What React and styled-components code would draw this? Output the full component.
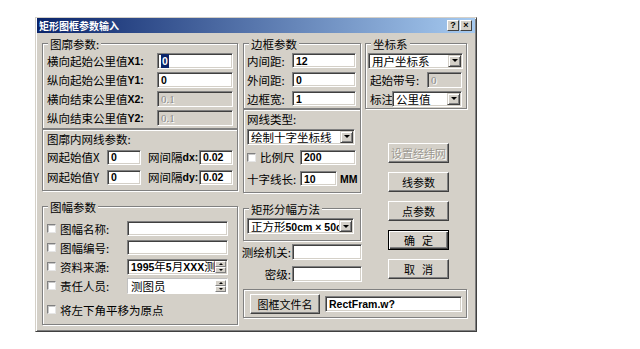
import React from 'react'
import styled, { createGlobalStyle, css } from 'styled-components'

const face = '#d4d0c8';

const GlobalStyle = createGlobalStyle`
  html, body { margin: 0; padding: 0; background: #fff; }
  body {
    font-family: "Noto Sans CJK SC", "Liberation Sans", sans-serif;
    font-size: 11.5px;
    color: #000;
  }
`;

const Dialog = styled.div`
  margin: 17px 0 0 35px;
  width: 442px;
  height: 315px;
  box-sizing: border-box;
  background: ${face};
  border: 1px solid;
  border-color: ${face} #404040 #404040 ${face};
  box-shadow: inset 1px 1px #fff, inset -1px -1px #808080;
  padding: 0 1px 1px 1px;
  display: flex;
  flex-direction: column;
`;

const TitleBar = styled.div`
  height: 15px;
  display: flex;
  align-items: center;
  justify-content: space-between;
  background: linear-gradient(90deg, #0a246a, #a6caf0);
  padding: 0 3px 0 2px;
`;

const Title = styled.span`
  color: #fff;
  font-weight: bold;
  font-size: 10px;
  line-height: 15px;
`;

const CapButtons = styled.div`
  display: flex;
  gap: 1px;
`;

const CapButton = styled.span`
  box-sizing: border-box;
  width: 12px;
  height: 11px;
  background: ${face};
  border: 1px solid;
  border-color: #fff #404040 #404040 #fff;
  display: flex;
  align-items: center;
  justify-content: center;
  font-family: "Liberation Sans", sans-serif;
  font-weight: bold;
  font-size: 9px;
  line-height: 9px;
`;

const Body = styled.div`
  display: flex;
  gap: 5px;
  padding: 10px 0 0 5px;
`;

const Column = styled.div`
  width: ${p => p.$w}px;
  flex: none;
  display: flex;
  flex-direction: column;
`;

const TopRow = styled.div`
  display: flex;
  gap: 4px;
`;

const Group = styled.div`
  box-sizing: border-box;
  height: ${p => p.$h}px;
  margin-top: ${p => p.$mt || 0}px;
  border: 1px solid #808080;
  box-shadow: inset 1px 1px #fff, 1px 1px #fff;
  display: flex;
  flex-direction: column;
  padding: 0 ${p => p.$px ?? 3}px;
`;

const Caption = styled.span`
  align-self: flex-start;
  margin: -7px 0 0 ${p => p.$ml ?? 2}px;
  padding: 0 2px;
  background: ${face};
  line-height: 14px;
  height: 14px;
  white-space: nowrap;
`;

const Row = styled.div`
  display: flex;
  align-items: center;
  height: ${p => p.$h || 19}px;
  flex: none;
  margin-top: ${p => p.$mt || 0}px;
  margin-left: ${p => p.$ml || 0}px;
`;

const Label = styled.span`
  width: ${p => p.$w}px;
  flex: none;
  display: flex;
  justify-content: ${p => (p.$right ? 'flex-end' : 'flex-start')};
  white-space: nowrap;
  line-height: 14px;
  margin-left: ${p => p.$ml || 0}px;
`;

const B = styled.span`
  font-family: "Liberation Sans", sans-serif;
  font-weight: bold;
  font-size: 10.5px;
`;

const Field = styled.div`
  box-sizing: border-box;
  flex: none;
  width: ${p => p.$w}px;
  height: ${p => p.$h || 16}px;
  background: ${p => (p.$disabled ? face : '#fff')};
  color: ${p => (p.$disabled ? '#8a8a8a' : '#000')};
  border: 1px solid;
  border-color: #808080 #fff #fff #808080;
  box-shadow: inset 1px 1px #404040, inset -1px -1px ${face};
  padding: 0 0 0 3px;
  display: flex;
  align-items: center;
  overflow: hidden;
  white-space: nowrap;
  line-height: 14px;
  margin-left: ${p => p.$ml || 0}px;
  ${p => p.$disabled && css`
    font-family: "Liberation Serif", serif;
    font-size: 11px;
    text-shadow: 1px 1px #fff;
  `}
`;

const FieldText = styled.span`
  flex: 1;
  overflow: hidden;
`;

const Sel = styled(B)`
  background: #0a246a;
  color: #fff;
  padding: 0 1px;
`;

const DropBtn = styled.span`
  box-sizing: border-box;
  flex: none;
  width: 13px;
  height: 12px;
  margin-right: 1px;
  background: ${face};
  border: 1px solid;
  border-color: ${face} #404040 #404040 ${face};
  box-shadow: inset 1px 1px #fff, inset -1px -1px #808080;
  display: flex;
  align-items: center;
  justify-content: center;
  &::after {
    content: '';
    border-left: 3px solid transparent;
    border-right: 3px solid transparent;
    border-top: 3px solid #000;
  }
`;

const Spin = styled.span`
  flex: none;
  display: flex;
  flex-direction: column;
  margin-right: 1px;
`;

const SpinBtn = styled.span`
  box-sizing: border-box;
  width: 11px;
  height: 6px;
  background: ${face};
  border: 1px solid;
  border-color: #fff #808080 #808080 #fff;
  display: flex;
  align-items: center;
  justify-content: center;
  &::after {
    content: '';
    border-left: 2px solid transparent;
    border-right: 2px solid transparent;
    ${p => (p.$up
      ? css`border-bottom: 2px solid #000;`
      : css`border-top: 2px solid #000;`)}
  }
`;

const Check = styled.span`
  box-sizing: border-box;
  flex: none;
  width: 9px;
  height: 9px;
  background: #fff;
  border: 1px solid;
  border-color: #808080 #e6e6e6 #e6e6e6 #808080;
  box-shadow: inset 1px 1px #c8c8c8;
  margin-right: ${p => p.$mr ?? 4}px;
`;

const Button = styled.button`
  box-sizing: border-box;
  flex: none;
  width: ${p => p.$w || 61}px;
  height: 20px;
  padding: 0;
  background: ${face};
  font-family: inherit;
  font-size: 11px;
  line-height: 14px;
  white-space: nowrap;
  color: #000;
  border: 1px solid;
  border-color: #fff #404040 #404040 #fff;
  box-shadow: inset -1px -1px #808080;
  display: flex;
  align-items: center;
  justify-content: center;
  &:disabled {
    color: #9a978f;
    text-shadow: 1px 1px #fff;
  }
  ${p => p.$default && css`
    border-color: #000;
    box-shadow: inset 1px 1px #fff, inset -1px -1px #404040, inset -2px -2px #808080;
  `}
`;

const Sp = styled.span`
  display: inline-block;
  width: 7px;
`;

const ButtonStack = styled.div`
  display: flex;
  flex-direction: column;
  gap: 9px;
  margin: 34px 0 0 23px;
`;

const Combo = ({ w, ml, children }) => (
  <Field $w={w} $ml={ml}>
    <FieldText>{children}</FieldText>
    <DropBtn />
  </Field>
);

const Spinner = ({ w, children, light }) => (
  <Field $w={w} style={light ? { boxShadow: 'none', borderColor: '#c0c0c0 #fff #fff #c0c0c0' } : undefined}>
    <FieldText>{children}</FieldText>
    <Spin>
      <SpinBtn $up />
      <SpinBtn />
    </Spin>
  </Field>
);

const sheetRows = [
  { label: '图幅名称:', value: '' },
  { label: '图幅编号:', value: '' },
];

export default function App() {
  return (
    <>
      <GlobalStyle />
      <Dialog>
        <TitleBar>
          <Title>矩形图框参数输入</Title>
          <CapButtons>
            <CapButton>?</CapButton>
            <CapButton>×</CapButton>
          </CapButtons>
        </TitleBar>

        <Body>
          <Column $w={196}>
            <Group $h={86} $px={4}>
              <Caption $ml={1}>图廓参数:</Caption>
              <Row>
                <Label $w={110}>横向起始公里值<B>X1:</B></Label>
                <Field $w={76}><Sel>0</Sel></Field>
              </Row>
              <Row>
                <Label $w={110}>纵向起始公里值<B>Y1:</B></Label>
                <Field $w={76}><B>0</B></Field>
              </Row>
              <Row>
                <Label $w={110}>横向结束公里值<B>X2:</B></Label>
                <Field $w={76} $disabled>0.1</Field>
              </Row>
              <Row>
                <Label $w={110}>纵向结束公里值<B>Y2:</B></Label>
                <Field $w={76} $disabled>0.1</Field>
              </Row>
            </Group>

            <Group $h={62} $px={4}>
              <Row $h={17}>
                <Label $w={120}>图廓内网线参数:</Label>
              </Row>
              <Row $h={20}>
                <Label $w={60}>网起始值X</Label>
                <Field $w={34} $h={15}><B>0</B></Field>
                <Label $w={51} $ml={7}>网间隔<B>dx:</B></Label>
                <Field $w={34} $h={15}><B>0.02</B></Field>
              </Row>
              <Row $h={20}>
                <Label $w={60}>网起始值Y</Label>
                <Field $w={34} $h={15}><B>0</B></Field>
                <Label $w={51} $ml={7}>网间隔<B>dy:</B></Label>
                <Field $w={34} $h={15}><B>0.02</B></Field>
              </Row>
            </Group>

            <Group $h={119} $mt={15} $px={4}>
              <Caption $ml={1}>图幅参数</Caption>
              <Row $mt={5}>
                <Check />
                <Label $w={67}>{sheetRows[0].label}</Label>
                <Field $w={101} $h={15} />
              </Row>
              <Row>
                <Check />
                <Label $w={67}>{sheetRows[1].label}</Label>
                <Field $w={101} $h={15} />
              </Row>
              <Row>
                <Check />
                <Label $w={67}>资料来源:</Label>
                <Spinner w={101}><B>1995</B>年<B>5</B>月<B>XXX</B>测绘</Spinner>
              </Row>
              <Row>
                <Check />
                <Label $w={67}>责任人员:</Label>
                <Spinner w={101} light>测图员</Spinner>
              </Row>
              <Row $mt={5}>
                <Check />
                <Label $w={140}>将左下角平移为原点</Label>
              </Row>
            </Group>
          </Column>

          <Column $w={224}>
            <TopRow>
              <Column $w={118}>
                <Group $h={66}>
                  <Caption>边框参数</Caption>
                  <Row>
                    <Label $w={45}>内间距:</Label>
                    <Field $w={64} $h={15}><B>12</B></Field>
                  </Row>
                  <Row>
                    <Label $w={45}>外间距:</Label>
                    <Field $w={64} $h={15}><B>0</B></Field>
                  </Row>
                  <Row>
                    <Label $w={45}>边框宽:</Label>
                    <Field $w={64} $h={15}><B>1</B></Field>
                  </Row>
                </Group>

                <Group $h={84}>
                  <Row $h={17}>
                    <Label $w={80}>网线类型:</Label>
                  </Row>
                  <Row>
                    <Combo w={108}>绘制十字坐标线</Combo>
                  </Row>
                  <Row $h={22}>
                    <Check />
                    <Label $w={40}>比例尺</Label>
                    <Field $w={56} $h={15}><B>200</B></Field>
                  </Row>
                  <Row $h={21}>
                    <Label $w={53}>十字线长:</Label>
                    <Field $w={37} $h={15}><B>10</B></Field>
                    <Label $w={18} $ml={3}><B>MM</B></Label>
                  </Row>
                </Group>

                <Group $h={33} $mt={15}>
                  <Caption>矩形分幅方法</Caption>
                  <Row $h={20}>
                    <Combo w={107}>正方形<B>50cm × 50cm</B></Combo>
                  </Row>
                </Group>

                <Row $h={22}>
                  <Label $w={48} $right>测绘机关:</Label>
                  <Field $w={70} $h={16} $ml={1} />
                </Row>
                <Row $h={22}>
                  <Label $w={48} $right>密级:</Label>
                  <Field $w={70} $h={16} $ml={1} />
                </Row>
              </Column>

              <Column $w={102}>
                <Group $h={66} $px={2}>
                  <Caption $ml={3}>坐标系</Caption>
                  <Row>
                    <Combo w={95}>用户坐标系</Combo>
                  </Row>
                  <Row>
                    <Label $w={57} $ml={2}>起始带号:</Label>
                    <Field $w={35} $disabled>0</Field>
                  </Row>
                  <Row>
                    <Label $w={22} $ml={2}>标注</Label>
                    <Combo w={70}>公里值</Combo>
                  </Row>
                </Group>

                <ButtonStack>
                  <Button disabled>设置经纬网</Button>
                  <Button>线参数</Button>
                  <Button>点参数</Button>
                  <Button $default>确<Sp />定</Button>
                  <Button>取<Sp />消</Button>
                </ButtonStack>
              </Column>
            </TopRow>

            <Group $h={29} $mt={4} $px={6}>
              <Row $h={27}>
                <Button $w={70}>图框文件名</Button>
                <Field $w={137} $ml={5}><B>RectFram.w?</B></Field>
              </Row>
            </Group>
          </Column>
        </Body>
      </Dialog>
    </>
  )
}
